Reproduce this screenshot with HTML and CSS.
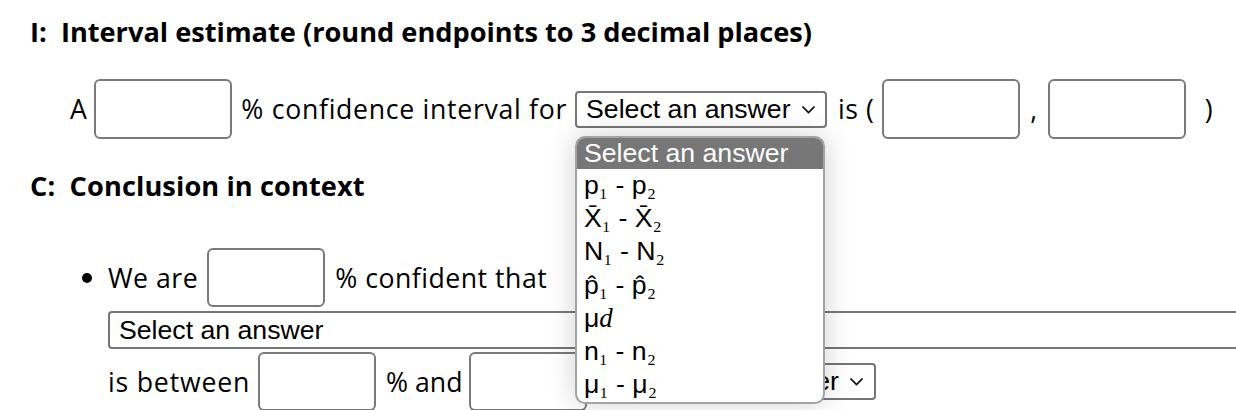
FILE: index.html
```html
<!DOCTYPE html>
<html lang="en">
<head>
<meta charset="utf-8">
<title>Interval estimate</title>
<link rel="stylesheet" href="styles.css">
</head>
<body>
<main class="page">
  <h3 class="part-title">I:&nbsp; Interval estimate (round endpoints to 3 decimal places)</h3>

  <div class="row row-interval">
    <span class="txt t-a">A</span>
    <span class="field f-wide"></span>
    <span class="txt t-conf">% confidence interval for</span>
    <div class="select sel-param">
      <span class="sel-text">Select an answer</span>
      <svg class="chev" width="15" height="9" viewBox="0 0 15 9"><path d="M1.5 1.5 L7.5 7.5 L13.5 1.5" fill="none" stroke="#000" stroke-width="1.6"/></svg>
    </div>
    <span class="txt t-is">is (</span>
    <span class="field f-wide"></span>
    <span class="txt t-comma">,</span>
    <span class="field f-wide"></span>
    <span class="txt t-close">)</span>
  </div>

  <h3 class="part-title part-c">C:&nbsp; Conclusion in context</h3>

  <div class="item">
    <span class="dot"></span>
    <div class="item-body">
      <div class="row row-we">
        <span class="txt">We are</span>
        <span class="field f-small"></span>
        <span class="txt">% confident that</span>
      </div>
      <div class="select sel-long">
        <span class="sel-text">Select an answer</span>
      </div>
      <div class="row row-between">
        <span class="txt t-between">is between</span>
        <span class="field f-small f-first"></span>
        <span class="txt t-and">% and</span>
        <span class="field f-small f-second"></span>
        <div class="select sel-unit">
          <span class="sel-text">Select an answer</span>
          <svg class="chev" width="15" height="9" viewBox="0 0 15 9"><path d="M1.5 1.5 L7.5 7.5 L13.5 1.5" fill="none" stroke="#000" stroke-width="1.6"/></svg>
        </div>
      </div>
    </div>
  </div>

  <div class="popup">
    <div class="opt opt-head">Select an answer</div>
    <div class="opt">p<span class="sub">₁</span> - p<span class="sub">₂</span></div>
    <div class="opt">X̄<span class="sub">₁</span> - X̄<span class="sub">₂</span></div>
    <div class="opt">N<span class="sub">₁</span> - N<span class="sub">₂</span></div>
    <div class="opt">p̂<span class="sub">₁</span> - p̂<span class="sub">₂</span></div>
    <div class="opt">μ<i class="mi">d</i></div>
    <div class="opt">n<span class="sub">₁</span> - n<span class="sub">₂</span></div>
    <div class="opt">μ<span class="sub">₁</span> - μ<span class="sub">₂</span></div>
  </div>
</main>
</body>
</html>
```
FILE: styles.css
```css
html, body {
  margin: 0;
  padding: 0;
  overflow: hidden;
  background: #fff;
}
body {
  width: 1236px;
  height: 410px;
  font-family: "Open Sans", "Lato", sans-serif;
  color: #000;
}
.page {
  position: relative;
  height: 410px;
}
.part-title {
  margin: 0;
  padding: 13px 0 0 30px;
  height: 38px;
  font-size: 27.2px;
  font-weight: 700;
  line-height: 38px;
  white-space: nowrap;
}
.part-c {
  padding-top: 28px;
  letter-spacing: 0.1px;
}
.row {
  display: flex;
  align-items: center;
  white-space: nowrap;
}
.txt {
  font-size: 26.67px;
  letter-spacing: 0.5px;
  line-height: 32px;
}
.row-interval {
  margin-top: 28px;
  padding-left: 70px;
  height: 60px;
}
.t-a { margin-right: 7px; }
.t-conf { margin: 0 8px 0 9px; letter-spacing: 0.7px; }
.t-is { margin: 0 8px 0 11px; }
.t-comma { margin: 0 10px 0 10px; }
.t-close { margin-left: 19px; }
.field {
  box-sizing: border-box;
  display: block;
  height: 60px;
  border: 2px solid #7a7a7a;
  border-radius: 6px;
  background: #fff;
  flex: none;
}
.f-wide { width: 138px; }
.f-small { width: 118px; height: 59px; }
.select {
  box-sizing: border-box;
  display: flex;
  align-items: center;
  border: 2px solid #767676;
  border-radius: 4px;
  background: #fff;
  font-family: "Liberation Sans", Arial, sans-serif;
  font-size: 26.67px;
  flex: none;
}
.sel-text { flex: none; }
.chev { flex: none; margin-left: auto; }
.sel-param {
  width: 252px;
  height: 37px;
  padding: 0 9px 0 9px;
}
.item {
  display: flex;
  padding-left: 82px;
  margin-top: 43px;
}
.dot {
  flex: none;
  width: 10px;
  height: 10px;
  border-radius: 50%;
  background: #000;
  margin: 25px 16px 0 0;
}
.item-body {
  flex: 1;
  min-width: 0;
}
.row-we { height: 59px; }
.row-we .field { margin: 0 10px 0 9px; }
.sel-long {
  width: 1300px;
  height: 38px;
  margin-top: 4px;
  padding-left: 9px;
}
.row-between {
  margin-top: 3px;
  height: 59px;
}
.t-between { letter-spacing: 0.8px; }
.f-first { margin: 0 10px 0 8px; }
.t-and { letter-spacing: 0px; }
.f-second { margin-left: 6px; }
.sel-unit {
  width: 251px;
  height: 37px;
  margin-left: 38px;
  padding: 0 10px 0 8px;
}
.popup {
  position: absolute;
  left: 575px;
  top: 136px;
  width: 250px;
  height: 268px;
  box-sizing: border-box;
  border: 2px solid #a3a3a3;
  border-radius: 10px;
  background: #fff;
  box-shadow: 0 0 28px rgba(0, 0, 0, 0.18);
  overflow: hidden;
  font-family: "Liberation Sans", Arial, sans-serif;
  font-size: 26.67px;
}
.opt {
  height: 33.2px;
  line-height: 33px;
  padding-left: 7px;
  white-space: nowrap;
}
.opt-head {
  height: 31px;
  line-height: 30px;
  background: #777;
  color: #fff;
}
.sub {
  font-family: "Liberation Serif", "DejaVu Serif", serif;
}
.mi {
  font-family: "Liberation Serif", "DejaVu Serif", serif;
  font-style: italic;
  font-size: 27px;
}
```
